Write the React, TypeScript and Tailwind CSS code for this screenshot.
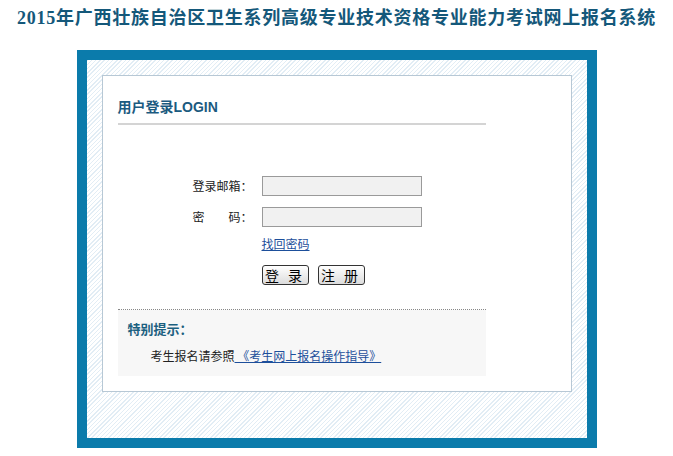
import * as React from 'react'

const cn = '"Noto Sans CJK SC", sans-serif'

const App: React.FunctionComponent = () => {
    return (
        <div className="w-[673px] h-[456px] bg-white" style={{ fontFamily: cn }}>
            {/* page title */}
            <h1 className="h-[50px] pt-[5px] text-center text-[18px] leading-[27px] font-bold tracking-[0.75px] text-[#14587a]" style={{ fontFamily: '"Liberation Serif", "Noto Sans CJK SC", serif' }}>
                2015年广西壮族自治区卫生系列高级专业技术资格专业能力考试网上报名系统
            </h1>

            {/* blue frame with hatched inner area */}
            <div className="mx-auto w-[520px] border-[10px] border-[#0b7bab] bg-[repeating-linear-gradient(135deg,#e2edf5_0,#e2edf5_1px,#ffffff_1px,#ffffff_3px)] px-[15px] pt-[15px] pb-[46px]">
                <div className="h-[317px] border border-[#b7c8d5] bg-white pl-[15px] pt-[21px]">
                    <div className="w-[368px]">
                        <div className="text-[14px] leading-[20px] font-bold text-[#1b5a80]" style={{ fontFamily: '"Liberation Sans", "Noto Sans CJK SC", sans-serif' }}>用户登录LOGIN</div>
                        <div className="mt-[6px] h-[2px] bg-[#d4d4d4]" />

                        {/* login form */}
                        <div className="mt-[51px] flex items-center text-[12px] text-[#222]">
                            <div className="ml-[75px] w-[60px] leading-[20px]">登录邮箱：</div>
                            <input className="ml-[9px] h-[20px] w-[160px] border border-[#9a9a9a] bg-[#f1f1f1] outline-none" />
                        </div>
                        <div className="mt-[11px] flex items-center text-[12px] text-[#222]">
                            <div className="ml-[75px] flex w-[60px] justify-between leading-[20px]">
                                <span>密</span>
                                <span>码：</span>
                            </div>
                            <input type="password" className="ml-[9px] h-[20px] w-[160px] border border-[#9a9a9a] bg-[#f1f1f1] outline-none" />
                        </div>
                        <div className="mt-[9px] pl-[144px] text-[12px] leading-[16px]">
                            <a href="#" className="text-[#1d4f9b] underline">找回密码</a>
                        </div>
                        <div className="mt-[13px] flex gap-[9px] pl-[144px]">
                            <button className="h-[20px] w-[47px] rounded-[3px] border border-[#333] bg-gradient-to-b from-white to-[#dcdcdc] text-[14px] leading-[18px] tracking-[3px] text-black">登 录</button>
                            <button className="h-[20px] w-[47px] rounded-[3px] border border-[#333] bg-gradient-to-b from-white to-[#dcdcdc] text-[14px] leading-[18px] tracking-[3px] text-black">注 册</button>
                        </div>

                        {/* notice */}
                        <div className="mt-[24px] border-t border-dotted border-[#888]" />
                        <div className="h-[66px] bg-[#f7f7f7] pl-[10px] pt-[11px] text-[12px] leading-[16px]">
                            <div className="text-[13px] font-bold text-[#1b6080]">特别提示：</div>
                            <div className="mt-[11px] pl-[23px] text-[#222]">
                                考生报名请参照<a href="#" className="text-[#1d4f9b] underline"> 《考生网上报名操作指导》</a>
                            </div>
                        </div>
                    </div>
                </div>
            </div>
        </div>
    )
}

export default App
